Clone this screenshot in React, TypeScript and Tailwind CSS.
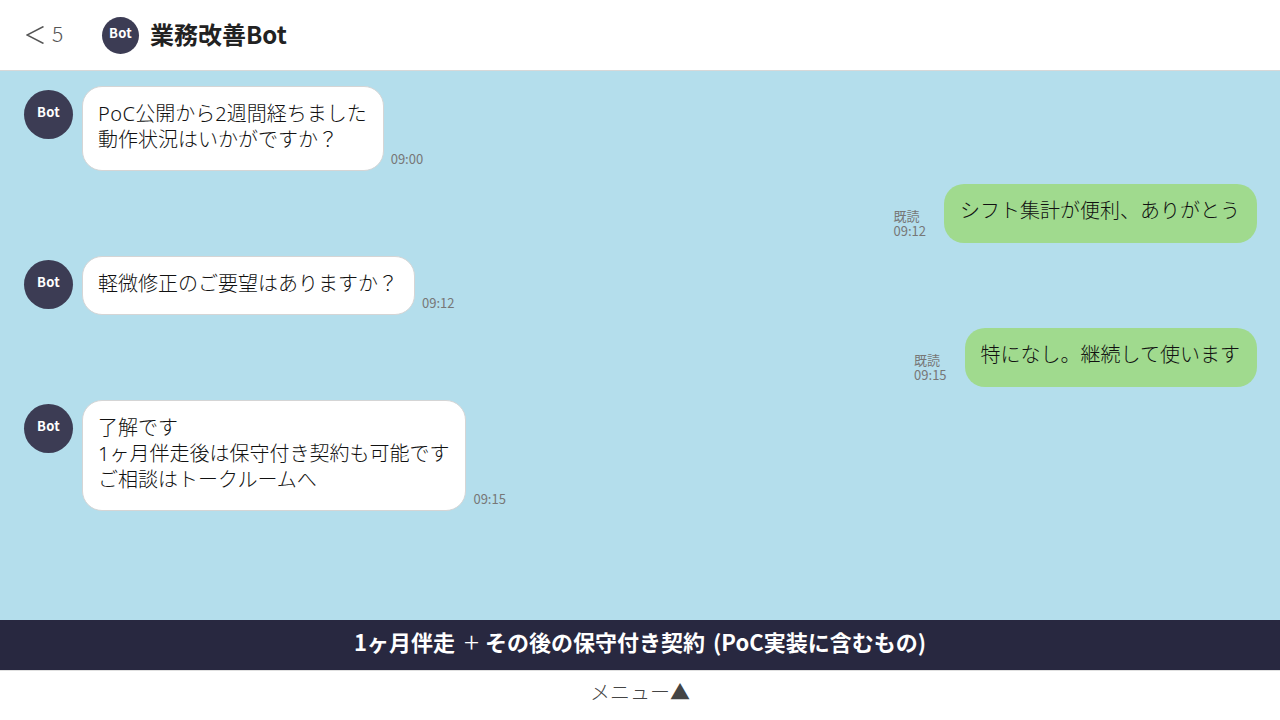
import type { ReactNode } from "react";

function Avatar({ small }: { small?: boolean }) {
  return small ? (
    <div className="flex h-[37px] w-[37px] shrink-0 items-center justify-center rounded-full bg-[#3c3c54] pb-[4px] font-['Noto_Sans_CJK_JP',sans-serif] text-[13px] font-bold tracking-[0.3px] text-white">Bot</div>
  ) : (
    <div className="mt-[4px] flex h-[49px] w-[49px] shrink-0 items-center justify-center rounded-full bg-[#3c3c54] pb-[5px] font-['Noto_Sans_CJK_JP',sans-serif] text-[13px] font-bold tracking-[0.3px] text-white">Bot</div>
  );
}

function Left({ lines, time }: { lines: ReactNode[]; time: string }) {
  return (
    <div className="flex items-start pl-[24px]">
      <Avatar />
      <div className="ml-[9px] rounded-[20px] border border-[#d5d5d5] bg-white pl-[15px] pr-[16px] pt-[14px] pb-[17px] text-[20px] leading-[26px] font-light text-[#111]">
        {lines.map((l, i) => (
          <div key={i} className="whitespace-nowrap">{l}</div>
        ))}
      </div>
      <div className="ml-[7px] self-end pb-[5px] font-['Noto_Sans_CJK_JP',sans-serif] text-[13px] leading-[15px] text-[#777]">{time}</div>
    </div>
  );
}

function Right({ text, time }: { text: string; time: string }) {
  return (
    <div className="flex items-start justify-end pr-[23px]">
      <div className="mr-[18px] self-end pb-[5px] font-['Noto_Sans_CJK_JP',sans-serif] text-[13px] leading-[15px] text-[#777]">
        <div>既読</div>
        <div>{time}</div>
      </div>
      <div className="rounded-[20px] bg-[#a0da8e] pl-[16px] pr-[17px] pt-[14px] pb-[19px] text-[20px] leading-[26px] font-light whitespace-nowrap text-[#111]">{text}</div>
    </div>
  );
}

export default function App() {
  return (
    <div className="flex h-[720px] w-[1280px] flex-col overflow-hidden bg-white font-['Noto_Sans','Noto_Sans_CJK_JP',sans-serif]">
      <header className="flex h-[71px] shrink-0 items-center border-b border-[#d8d8d8] bg-white pl-[26px]">
        <svg width="18" height="18" viewBox="0 0 18 18" className="shrink-0" fill="none" stroke="#555" strokeWidth="1.5">
          <path d="M17.5 0.5 L1 9 L17.5 17.5" />
        </svg>
        <span className="ml-[8px] w-[50px] pb-[3px] font-['Noto_Sans_CJK_JP',sans-serif] text-[21px] leading-none font-light text-[#555]">5</span>
        <Avatar small />
        <h1 className="ml-[11px] pb-[3px] font-['Noto_Sans_CJK_JP',sans-serif] text-[24px] leading-none font-bold text-[#222]">業務改善Bot</h1>
      </header>
      <main className="flex flex-1 flex-col gap-[13px] bg-[#b4deec] pt-[15px]">
        <Left lines={[<><span className="tracking-[0.4px]">PoC</span>公開から2週間経ちました</>, "動作状況はいかがですか？"]} time="09:00" />
        <Right text="シフト集計が便利、ありがとう" time="09:12" />
        <Left lines={["軽微修正のご要望はありますか？"]} time="09:12" />
        <Right text="特になし。継続して使います" time="09:15" />
        <Left lines={["了解です", "1ヶ月伴走後は保守付き契約も可能です", "ご相談はトークルームへ"]} time="09:15" />
      </main>
      <div className="flex h-[50px] shrink-0 items-center justify-center bg-[#282840] pb-[8px] font-['Noto_Sans_CJK_JP',sans-serif] text-[22px] font-bold whitespace-pre text-white">
        <span>1ヶ月伴走</span>
        <span className="ml-[9px] mr-[6px] text-[28px] leading-none font-light">+</span>
        <span>その後の保守付き契約</span>
        <span className="ml-[8px]">(PoC実装に含むもの)</span>
      </div>
      <div className="flex h-[50px] shrink-0 items-center justify-center border-t border-[#e0e0e0] bg-white pb-[6px] text-[20px] font-light text-[#444]">メニュー▲</div>
    </div>
  );
}
